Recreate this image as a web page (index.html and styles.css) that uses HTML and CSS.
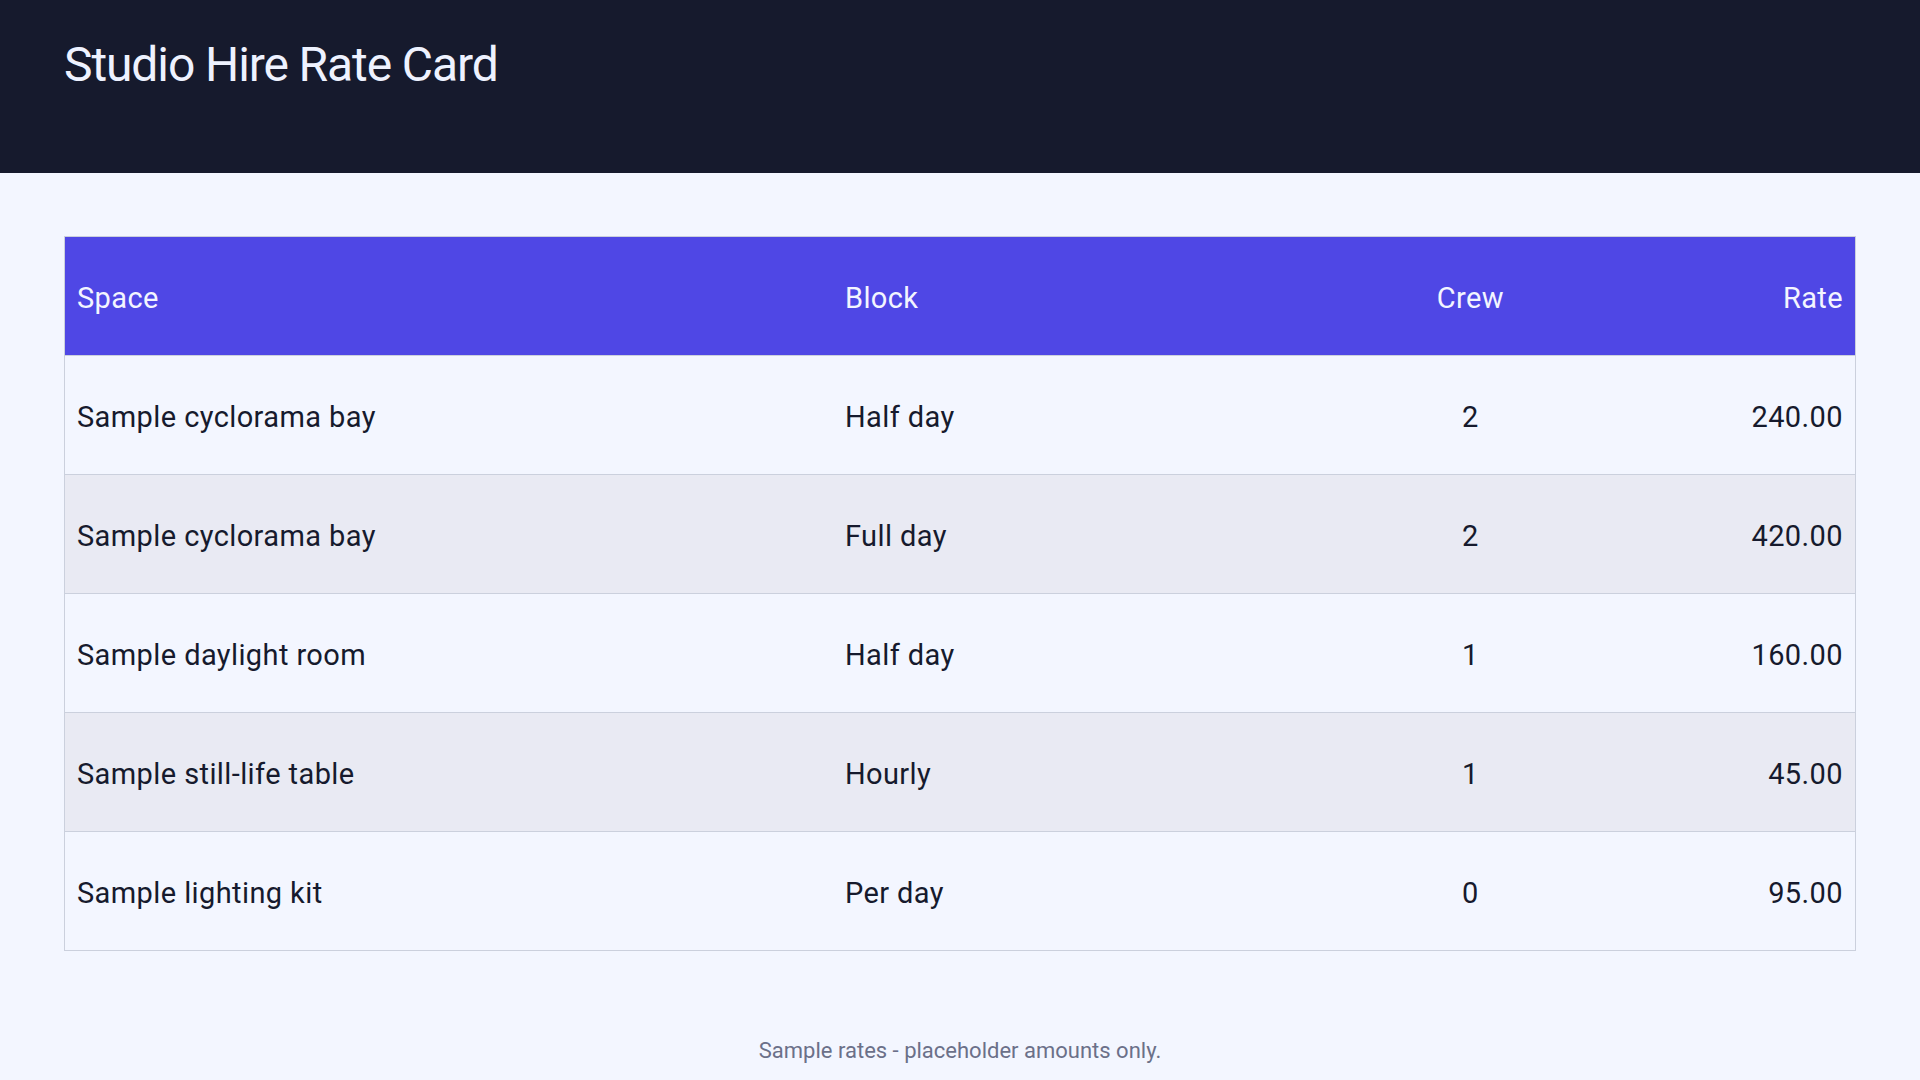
FILE: index.html
```html
<!DOCTYPE html>
<html lang="en">
<head>
<meta charset="utf-8">
<title>Studio Hire Rate Card</title>
<link rel="stylesheet" href="styles.css">
</head>
<body>
<header class="topbar">
  <h1 class="title">Studio Hire Rate Card</h1>
</header>
<main class="content">
  <table class="rates">
    <colgroup>
      <col class="col-space">
      <col class="col-block">
      <col class="col-crew">
      <col class="col-rate">
    </colgroup>
    <thead>
      <tr>
        <th class="left">Space</th>
        <th class="left">Block</th>
        <th class="center">Crew</th>
        <th class="right">Rate</th>
      </tr>
    </thead>
    <tbody>
      <tr><td class="left">Sample cyclorama bay</td><td class="left">Half day</td><td class="center">2</td><td class="right">240.00</td></tr>
      <tr><td class="left">Sample cyclorama bay</td><td class="left">Full day</td><td class="center">2</td><td class="right">420.00</td></tr>
      <tr><td class="left">Sample daylight room</td><td class="left">Half day</td><td class="center">1</td><td class="right">160.00</td></tr>
      <tr><td class="left">Sample still-life table</td><td class="left">Hourly</td><td class="center">1</td><td class="right">45.00</td></tr>
      <tr><td class="left">Sample lighting kit</td><td class="left">Per day</td><td class="center">0</td><td class="right">95.00</td></tr>
    </tbody>
  </table>
  <p class="note">Sample rates - placeholder amounts only.</p>
</main>
</body>
</html>
```
FILE: styles.css
```css
* { box-sizing: border-box; }
html, body {
  margin: 0;
  padding: 0;
  background: #f3f6ff;
  font-family: Roboto, "Liberation Sans", Arial, sans-serif;
  color: #161a2d;
}
.topbar {
  background: #161a2d;
  height: 173px;
  padding: 37px 64px 0;
}
.title {
  margin: 0;
  font-size: 48px;
  font-weight: 400;
  line-height: 56px;
  letter-spacing: -1.1px;
  color: #eef2ff;
}
.content {
  padding: 63px 64px 0;
}
.rates {
  width: 100%;
  border-collapse: collapse;
  table-layout: fixed;
  border: 1px solid #cbd0dd;
  font-size: 29px;
  letter-spacing: 0.4px;
}
.col-space { width: 768px; }
.col-block { width: 509px; }
.col-crew { width: 256px; }
.col-rate { width: 257px; }
.rates th,
.rates td {
  padding: 42px 12px 38px;
  line-height: 38px;
  font-weight: 400;
}
.rates thead th {
  background: #4f47e5;
  color: #f3f5ff;
}
.rates tbody tr {
  border-top: 1px solid #cbd0dd;
  background: #f3f6ff;
}
.rates tbody tr:nth-child(even) {
  background: #e9eaf3;
}
.left { text-align: left; }
.center { text-align: center; }
.right { text-align: right; }
.note {
  margin: 87px 0 0;
  text-align: center;
  font-size: 22px;
  letter-spacing: 0;
  color: #6b7089;
}
```
